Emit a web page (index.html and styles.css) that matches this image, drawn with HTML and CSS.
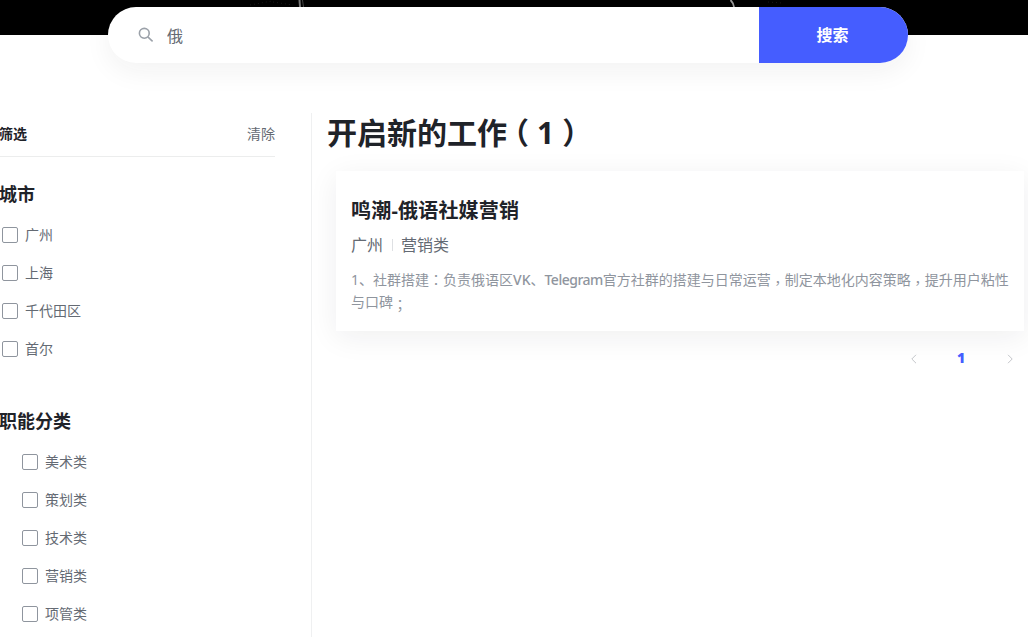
FILE: index.html
```html
<!DOCTYPE html>
<html lang="zh-CN">

<head>
  <meta charset="UTF-8">
  <meta name="viewport" content="width=device-width, initial-scale=1.0">
  <title>开启新的工作</title>
  <link rel="stylesheet" href="styles.css">
</head>

<body>
  <header class="banner">
    <svg class="banner-bg" width="1028" height="35" viewBox="0 0 1028 35">
      <path d="M299.5 0l.5 7" stroke="#777" stroke-width="2" fill="none" />
      <path d="M302.5 0l1 7" stroke="#444" fill="none" />
      <path d="M730.5 0q3 3 3.5 7" stroke="#999" stroke-width="1.8" fill="none" />
      <path d="M250 5l22-4M273 2l20 3M768 2l14 1" stroke="#1c1c1c" stroke-dasharray="1 3" fill="none" />
    </svg>
    <form class="search">
      <svg class="search-icon" width="16" height="16" viewBox="0 0 16 16">
        <circle cx="6.3" cy="6.3" r="4.9" />
        <path d="M9.8 9.8l4.8 4.5" />
      </svg>
      <input class="search-input" type="text" value="俄">
      <button class="search-btn" type="button">搜索</button>
    </form>
  </header>

  <main class="container">
    <aside class="filter">
      <div class="filter-head">
        <span class="filter-title">筛选</span>
        <span class="filter-clear">清除</span>
      </div>

      <h3>城市</h3>
      <ul class="options">
        <li><label><input type="checkbox">广州</label></li>
        <li><label><input type="checkbox">上海</label></li>
        <li><label><input type="checkbox">千代田区</label></li>
        <li><label><input type="checkbox">首尔</label></li>
      </ul>

      <h3>职能分类</h3>
      <ul class="options tree">
        <li><label><input type="checkbox">美术类</label></li>
        <li><label><input type="checkbox">策划类</label></li>
        <li><label><input type="checkbox">技术类</label></li>
        <li><label><input type="checkbox">营销类</label></li>
        <li><label><input type="checkbox">项管类</label></li>
      </ul>
    </aside>

    <section class="jobs">
      <h1>开启新的工作<span class="open">（</span><span class="num">1</span><span class="close">）</span></h1>

      <div class="card">
        <h2>鸣潮-俄语社媒营销</h2>
        <div class="meta"><span>广州</span><i></i><span>营销类</span></div>
        <p class="desc">1、社群搭建<span class="punc" lang="zh-TW">：</span>负责俄语区<b>VK</b>、<b class="tg">Telegram</b>官方社群的搭建与日常运营<span class="punc low" lang="zh-TW">，</span>制定本地化内容策略<span class="punc low" lang="zh-TW">，</span>提升用户粘性与口碑<span class="punc low" lang="zh-TW">；</span></p>
      </div>

      <nav class="pager">
        <svg width="8" height="10" viewBox="0 0 8 10"><path d="M6 .8L1.8 5L6 9.2" /></svg>
        <span class="page">1</span>
        <svg width="8" height="10" viewBox="0 0 8 10"><path d="M2 .8L6.2 5L2 9.2" /></svg>
      </nav>
    </section>
  </main>
</body>

</html>
```
FILE: styles.css
```css
* {
  box-sizing: border-box;
  margin: 0;
  padding: 0;
}

body {
  height: 637px;
  overflow: hidden;
  background: #fff;
  color: #1f2329;
  font-family: "Noto Sans", "Noto Sans CJK SC", sans-serif;
  font-size: 14px;
  line-height: 22px;
}

ul {
  list-style: none;
}

/* 顶部横幅 */
.banner {
  position: relative;
  height: 35px;
  padding-top: 7px;
  background: #000;
}

.banner-bg {
  position: absolute;
  top: 0;
  left: 0;
}

/* 搜索框 */
.search {
  position: relative;
  display: flex;
  align-items: center;
  width: 800px;
  height: 56px;
  margin-left: 108px;
  padding-left: 30px;
  border-radius: 28px;
  background: #fff;
  box-shadow: 0 8px 28px rgba(31, 35, 41, 0.06);
  overflow: hidden;
}

.search-icon {
  fill: none;
  stroke: #9ba1a9;
  stroke-width: 1.6;
}

.search-input {
  flex: 1;
  min-width: 0;
  height: 56px;
  padding-left: 13px;
  border: none;
  outline: none;
  background: transparent;
  color: #646a73;
  font: 16px "Noto Sans CJK SC", sans-serif;
}

.search-btn {
  width: 149px;
  height: 56px;
  padding: 0 2px 2px 0;
  border: none;
  background: #455dff;
  color: #fff;
  font: bold 16px "Noto Sans CJK SC", sans-serif;
}

.container {
  display: flex;
  padding-top: 78px;
}

/* 左侧筛选 */
.filter {
  width: 312px;
  height: 524px;
  padding-right: 36px;
  border-right: 1px solid #eff0f1;
}

.filter-head {
  display: flex;
  justify-content: space-between;
  height: 44px;
  padding-top: 10px;
  border-bottom: 1px solid #eceded;
}

.filter-title {
  margin-left: -1px;
  font-weight: bold;
}

.filter-clear {
  color: #646a73;
}

.filter h3 {
  height: 26px;
  margin: 24px 0 0 -1px;
  font-size: 18px;
  line-height: 26px;
}

.options {
  display: flex;
  flex-direction: column;
  gap: 16px;
  padding: 17px 0 24px 2px;
}

.options.tree {
  padding: 17px 0 0 22px;
}

.options label {
  display: flex;
  align-items: center;
  gap: 7px;
  color: #646a73;
}

.options input {
  appearance: none;
  width: 16px;
  height: 16px;
  border: 1px solid #8f959e;
  border-radius: 2px;
}

/* 右侧职位列表 */
.jobs {
  width: 712px;
  padding-left: 15px;
}

h1 {
  height: 42px;
  font-size: 30px;
  line-height: 40px;
}

h1 span {
  display: inline-block;
}

h1 .open {
  margin-left: -8px;
  margin-right: 8px;
}

h1 .close {
  margin-left: 8px;
}

.card {
  width: 688px;
  height: 160px;
  margin: 16px 0 0 9px;
  padding: 26px 12px 0 15px;
  background: #fff;
  box-shadow: 0 6px 28px rgba(31, 35, 41, 0.07);
}

.card h2 {
  font-size: 20px;
  line-height: 28px;
  letter-spacing: 0.2px;
}

.meta {
  display: flex;
  align-items: center;
  gap: 8px;
  margin-top: 8px;
  color: #646a73;
  font-size: 16px;
  line-height: 24px;
}

.meta i {
  width: 1px;
  height: 12px;
  margin-left: 1px;
  background: #dee0e3;
}

.desc {
  margin-top: 12px;
  color: #8f959e;
}

.desc b {
  font-weight: 500;
}

.desc .tg {
  letter-spacing: -0.5px;
}

/* 标点居中显示 */
.desc .punc {
  font-family: "Noto Sans CJK TC", sans-serif;
  line-height: 1;
}

.desc .low {
  position: relative;
  top: 3px;
}

/* 分页 */
.pager {
  display: flex;
  justify-content: flex-end;
  align-items: center;
  margin-top: 17px;
  padding-right: 10px;
}

.pager svg {
  fill: none;
  stroke: #c4c6ca;
}

.page {
  width: 88px;
  padding: 0 2px 2px 0;
  color: #455dff;
  font-weight: 900;
  line-height: 20px;
  text-align: center;
}
```
